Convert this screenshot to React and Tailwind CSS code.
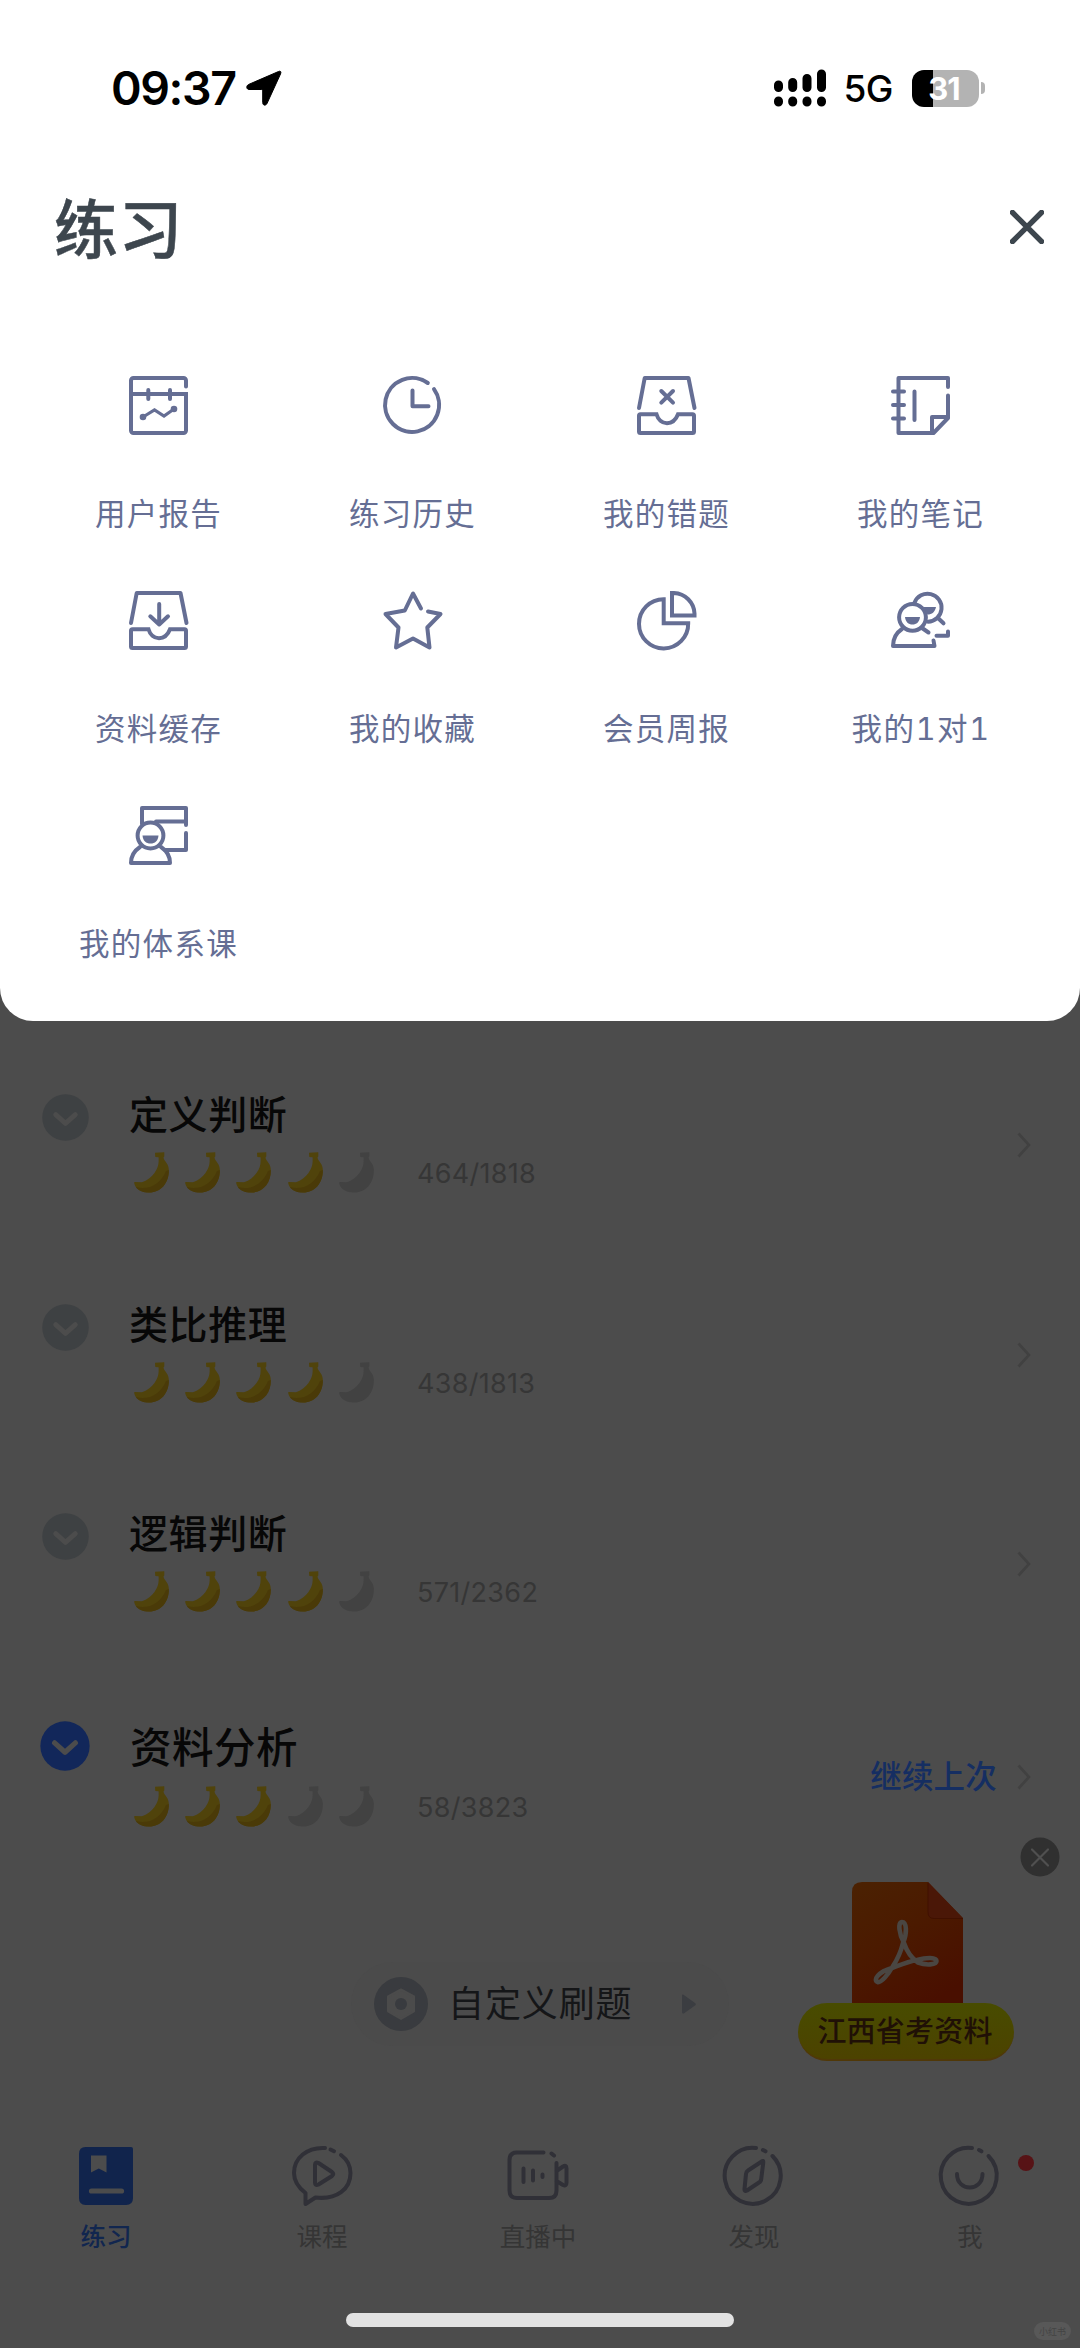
import React from "react";

const FONT = "font-[Inter,'Noto_Sans_CJK_SC',sans-serif]";

function Icon({ children, className = "" }) {
  return (
    <svg
      viewBox="0 0 60 60"
      className={`size-[60px] overflow-visible ${className}`}
      fill="none"
      stroke="currentColor"
      strokeWidth="4"
      strokeLinecap="round"
      strokeLinejoin="round"
    >
      {children}
    </svg>
  );
}

const Tray = () => (
  <>
    <path d="M2 32 7.700 2H51.500L57.500 32" />
    <path d="M19.500 38.300H3.500a1.500 1.500 0 0 0-1.500 1.500V55.500A1.500 1.500 0 0 0 3.500 57H55.500a1.500 1.500 0 0 0 1.500-1.500V39.800a1.500 1.500 0 0 0-1.500-1.500H41C39 43.500 35 47.200 30 47.200S21 43.500 19.500 38.300Z" strokeLinejoin="miter" />
  </>
);

const ReportIcon = () => (
  <Icon>
    <path d="M57 10.500V4.500A2.500 2.500 0 0 0 54.500 2H4.500A2.500 2.500 0 0 0 2 4.500V54.500A2.500 2.500 0 0 0 4.500 57H54.500A2.500 2.500 0 0 0 57 54.500V21" />
    <path d="M2 18H59M57 19V25" strokeLinecap="butt" />
    <path d="M19.300 14V23M41 14V23" />
    <path d="M14 41 25.500 34 35 40 45 33" strokeLinejoin="miter" strokeWidth="3.200" />
    <circle cx="14" cy="41" r="3.300" fill="currentColor" stroke="none" />
    <circle cx="45" cy="33" r="3.300" fill="currentColor" stroke="none" />
  </Icon>
);

const HistoryIcon = () => (
  <Icon>
    <path d="M44.800 7A27 27 0 1 0 51 13.200" />
    <path d="M29.500 14.500V30.300H45.500" />
  </Icon>
);

const WrongIcon = () => (
  <Icon>
    <Tray />
    <path d="M24.300 15 36 26.700M36 15 24.300 26.700" />
  </Icon>
);

const NoteIcon = () => (
  <Icon>
    <path d="M57 11V2H7.500V57H42.500L57 42V19.500" />
    <path d="M41 57V41H57M2 15.500H13M2 29H13M2 42.500H13M23.500 15.500V44" />
  </Icon>
);

const CacheIcon = () => (
  <Icon>
    <Tray />
    <path d="M30.200 13V33.500M21.300 25.300 30.200 33.500 39 25.300" />
  </Icon>
);

const StarIcon = () => (
  <Icon>
    <path d="M38 17.500 30 2.500 21.800 19.500 2.500 23 15.500 36.500 13 56.500 30 47.500 46.500 56.500 44.300 36.500 57.500 23 45 20.500" />
  </Icon>
);

const PieIcon = () => (
  <Icon>
    <g strokeLinejoin="miter">
      <path d="M26.700 8.200A24.600 24.600 0 1 0 51.200 32.300H26.700Z" />
      <path d="M35 2H37A21.500 21.500 0 0 1 57.500 22.500V24.400H35Z" />
    </g>
  </Icon>
);

const TutorIcon = () => (
  <Icon>
    <circle cx="21.500" cy="26.300" r="13.400" />
    <path d="M23.500 11.700A14 14 0 1 1 37 30.700M31 37 37.500 41.500M47.500 27.500 52.500 32.300" />
    <path d="M14 26H29C28.500 31 25.500 33.500 21.500 33.500S14.500 31 14 26ZM32.500 16H45C44 21 41 23.500 36.500 23.500Z" fill="currentColor" stroke="none" />
    <path d="M11 38C5 42 2 48.500 2 55H43.500L42.500 49.500" />
    <path d="M45.500 44.700H57V40.500" />
  </Icon>
);

const LessonIcon = () => (
  <Icon>
    <path d="M13 18V2H57V19M57 27V44H36M27 15.500H57" />
    <circle cx="21.500" cy="29.500" r="12.900" />
    <path d="M13.500 29.500H29.500C29 35 26 37.500 21.500 37.500S14 35 13.500 29.500Z" fill="currentColor" stroke="none" />
    <path d="M11 41C5 45 2 51 2 57H41C41 51 38 45 32 41" />
  </Icon>
);

const MENU = [
  ["用户报告", ReportIcon],
  ["练习历史", HistoryIcon],
  ["我的错题", WrongIcon],
  ["我的笔记", NoteIcon],
  ["资料缓存", CacheIcon],
  ["我的收藏", StarIcon],
  ["会员周报", PieIcon],
  ["我的1对1", TutorIcon],
  ["我的体系课", LessonIcon],
];

function StatusBar() {
  return (
    <div className="flex h-[176px] items-center pl-[111px] pr-[95px] text-black">
      <span className="text-[46.5px] leading-none font-semibold tracking-[-1.4px]">09:37</span>
      <svg viewBox="0 0 36 36" className="ml-[10px] size-[36px]">
        <path
          d="M32.500 1.500 2.500 14.500C-.2 16 .5 19.500 3 19.500H15C16.200 19.500 16.700 20 16.700 21V32.500C16.700 35.600 19.700 36 21 33.500L34.500 4C35.500 1.800 34.500.5 32.500 1.500Z"
          stroke="black"
          strokeWidth="1"
        />
      </svg>
      <div className="ml-auto flex items-center">
        <svg viewBox="0 0 52 38" className="h-[38px] w-[52px]" stroke="black" strokeWidth="9" strokeLinecap="round">
          <path d="M4.500 16V18.500M18.700 13.500V18.500M33 9.500V18.500M47.500 5V18.500M4.500 32V33M18.700 32V33M33 32V33M47.500 32V33" />
        </svg>
        <span className="ml-[17px] text-[37px] leading-none font-medium tracking-[-0.5px]">5G</span>
        <div className="ml-[19px] flex h-[37px] w-[67px] items-center justify-center rounded-[12px] bg-[linear-gradient(90deg,#000_31%,#b3b3b3_31%)] pr-[3px] text-[31px] leading-none font-bold tracking-[-1px] text-white">
          31
        </div>
        <div className="ml-[2px] h-[12px] w-[4px] rounded-r-full bg-[#b3b3b3]" />
      </div>
    </div>
  );
}

function MenuPanel() {
  return (
    <section className="h-[1021px] rounded-b-[33px] bg-white">
      <StatusBar />
      <header className="flex h-[102px] items-center justify-between pl-[54px] pr-[36px] text-[#3d464e]">
        <h1 className="mt-[5px] text-[64px] leading-none font-medium tracking-[0.5px] [-webkit-text-stroke:0.5px_currentColor]">练习</h1>
        <svg viewBox="0 0 34 34" className="-mt-px size-[34px]" stroke="currentColor" strokeWidth="5.400" strokeLinecap="round">
          <path d="M2.500 2.500 31.500 31.500M31.500 2.500 2.500 31.500" />
        </svg>
      </header>
      <div className="mt-[98px] grid grid-cols-4 px-[32px] text-[#656e94]">
        {MENU.map(([label, Glyph]) => (
          <div key={label} className="flex h-[215px] flex-col items-center">
            <Glyph />
            <span
              className={
                label === "我的1对1"
                  ? "mt-[58px] text-[30.5px] leading-[40px] tracking-[1.6px] whitespace-nowrap tabular-nums [word-spacing:0]"
                  : "mt-[58px] -ml-px text-[30.5px] leading-[40px] tracking-[1.3px] whitespace-nowrap"
              }
            >
              {label}
            </span>
          </div>
        ))}
      </div>
    </section>
  );
}

function Banana({ filled }) {
  return (
    <svg viewBox="0 0 36 41" className={filled ? "h-[41px] w-[36px] text-[#50430b]" : "h-[41px] w-[36px] text-[#424242]"}>
      <path
        fill="currentColor"
        d="M21 .8 30.300.300V4.500L29.500 5.500C30 9.500 34.800 11 34.800 18C35 31 27 40.500 15 40.500C8 40.500 1.500 37.500.300 31.500V30L8 30.300C14 28 17.500 25 20.500 21C24 16 25 12 24.600 5.300L21.300 5Z"
      />
      {filled && <path fill="#4a3a08" d="M2 35C14 39 27 32 32 19L34.800 18C35 31 27 40.500 15 40.500C9 40.500 4 38.500 2 35Z" />}
    </svg>
  );
}

const RightChevron = () => (
  <svg viewBox="0 0 14 26" className="h-[26px] w-[14px]" fill="none" stroke="#414141" strokeWidth="2.600">
    <path d="M1.500 1.500 12 13 1.500 24.500" />
  </svg>
);

function Topic({ title, score, filled, active }) {
  return (
    <div className={active ? "flex h-[215px] items-start pt-[48px] pr-[49px]" : "flex h-[209.5px] items-start pt-[48px] pr-[49px]"}>
      <div className="flex w-[130px] justify-center">
        <svg viewBox="0 0 50 50" className={active ? "size-[52px] text-[#12275a]" : "mt-[2px] size-[49px] text-[#3e4143]"}>
          <circle cx="25" cy="25" r="23.700" fill="currentColor" />
          <path d="M15 22 25 31 35 22" fill="none" stroke="#4c4c4c" strokeWidth="5" strokeLinecap="round" strokeLinejoin="round" />
        </svg>
      </div>
      <div className="flex flex-col">
        <h2
          className={
            active
              ? "mt-[4px] text-[41.5px] leading-[48px] font-medium tracking-[0.5px] text-[#070707]"
              : "mt-0 -ml-px text-[39px] leading-[48px] font-medium tracking-[0.6px] text-[#070707]"
          }
        >
          {title}
        </h2>
        <div className={active ? "mt-[14px] flex items-center" : "mt-[13px] flex items-center"}>
          <div className="ml-[4px] flex w-[283px] gap-[15.200px]">
            {[0, 1, 2, 3, 4].map((n) => (
              <Banana key={n} filled={n < filled} />
            ))}
          </div>
          <span className="mt-[2px] text-[27px] leading-none tracking-[0.3px] text-[#363636]">{score}</span>
        </div>
      </div>
      <div className={active ? "mt-[37px] ml-auto flex h-[40px] items-center" : "mt-[34px] ml-auto flex h-[40px] items-center"}>
        {active && <span className="mr-[20px] text-[31.5px] leading-none font-medium tracking-[0.2px] text-[#152e62]">继续上次</span>}
        <RightChevron />
      </div>
    </div>
  );
}

function CustomButton() {
  return (
    <button className="mx-auto mt-[75px] flex h-[84px] w-[378px] items-center rounded-full bg-[#4b4b4b] pl-[23px] text-[#151618]">
      <svg viewBox="0 0 54 54" className="size-[54px]">
        <circle cx="27" cy="27" r="27" fill="#393b3f" />
        <path d="M27 12.500 40 19.500V34.500L27 42 14 34.500V19.500Z" fill="#4b4b4b" stroke="#4b4b4b" strokeWidth="2" strokeLinejoin="round" />
        <circle cx="27" cy="27" r="6" fill="#393b3f" />
      </svg>
      <span className="ml-[20px] text-[36px] leading-none tracking-[0.9px]">自定义刷题</span>
      <svg viewBox="0 0 14 20" className="ml-[49px] h-[20px] w-[14px]">
        <path d="M0 2Q0-.5 2.500 1.500L13 9Q14.500 10 13 11.500L2.500 19Q0 20.500 0 18Z" fill="#3b3d41" />
      </svg>
    </button>
  );
}

/* Promotional file badge floating above the page. */
function FloatingFile() {
  return (
    <aside className="absolute top-[1837px] right-[20px] flex w-[262px] flex-col">
      <svg viewBox="0 0 40 40" className="size-[40px] self-end">
        <circle cx="20" cy="20" r="19.500" fill="#303030" />
        <path d="M12 12.500 28 28.500M28 12.500 12 28.500" stroke="#505050" strokeWidth="2.200" strokeLinecap="round" />
      </svg>
      <svg viewBox="0 0 112 122" className="mt-[5px] ml-[54px] h-[122px] w-[112px]">
        <defs>
          <linearGradient id="sheet" x1="0.100" y1="0" x2="0.700" y2="1">
            <stop offset="0" stopColor="#4b2102" />
            <stop offset="0.450" stopColor="#4b1a00" />
            <stop offset="1" stopColor="#490f00" />
          </linearGradient>
        </defs>
        <path d="M0 10Q0 0 10 0H76L111 36V122H0Z" fill="url(#sheet)" />
        <path d="M76 0 111 36.500H82Q76 36.500 76 30Z" fill="#4a1707" />
        <path d="M76 1V30Q76 36.500 82 36.500H111" fill="none" stroke="#401000" strokeWidth="1" />
        <path
          d="M52 61C47 52 45.500 40 50 40S55.500 51 51 61C49 69 45 78 41 84C36 93 29 101 25.500 100C21 98 26 90 40 86C48 83 56 79.500 65 78C74 75.500 84.500 75 84.500 79C84.500 83 74 83.500 66 80.500C60 76.500 55 70 52 61Z"
          fill="none"
          stroke="#4a4642"
          strokeWidth="4.600"
          strokeLinejoin="round"
        />
      </svg>
      <div className="-mt-px flex h-[58px] w-[216px] items-center justify-center rounded-full border-b-2 border-[#503808] bg-[linear-gradient(180deg,#484c00,#4c4200)] pr-[2px] text-[29px] leading-none font-medium tracking-[0.2px] text-[#201006]">
        江西省考资料
      </div>
    </aside>
  );
}

function PracticeGlyph() {
  return (
    <Icon>
      <path d="M9.500 1H55Q57 1 57 3V52Q57 59 50 59H9.500Q3 59 3 52V8Q3 1 9.500 1Z" fill="#11244c" stroke="none" />
      <path d="M15 9.500H30.500V26.500L22.800 22.500 15 26.500Z" fill="#4c4c4c" stroke="none" />
      <path d="M15.500 45H45.500" stroke="#4c4c4c" strokeWidth="5.200" />
    </Icon>
  );
}

const CourseGlyph = () => (
  <Icon>
    <path d="M33 2C15 1 2 12 2 27C2 36 7 42 13.500 47V58L23.500 51.500C45 54 58.500 43 58.500 27C58.500 20 55 13.500 49 9" />
    <path d="M38.500 3.500 42 5.200" />
    <path d="M23 19Q23 15.500 26.500 17L40 26Q42.500 28 40 30L26.500 38.500Q23 40 23 36.500Z" />
  </Icon>
);

const LiveGlyph = () => (
  <Icon>
    <path d="M35.500 6.500H9Q1.500 6.500 1.500 14V44.500Q1.500 52 9 52H41Q48.500 52 48.500 44.500V17M43.500 7.500 46 9.500M48.500 25 55 20.500Q58.500 18.500 58.500 22.500V36.500Q58.500 40.500 55 39L48.500 35" />
    <path d="M15.500 22.500V36M25 24.500V34.500M34.500 28.500V31" />
  </Icon>
);

const Ring = () => (
  <>
    <path d="M32 2A28 28 0 1 0 48.500 10" />
    <path d="M39 4 41.500 5.300" />
  </>
);

const DiscoverGlyph = () => (
  <Icon>
    <Ring />
    <path d="M38.500 15 24 24.500Q22.300 25.500 22 28L20.500 43Q20.200 46 23 44.500L35 36.500Q37 35.500 37.200 33L39.200 17Q39.500 14.500 38.500 15Z" />
  </Icon>
);

const MeGlyph = () => (
  <Icon>
    <Ring />
    <path d="M17 28C17 46 42.500 46 42.500 28" />
  </Icon>
);

const TABS = [
  ["练习", PracticeGlyph],
  ["课程", CourseGlyph],
  ["直播中", LiveGlyph],
  ["发现", DiscoverGlyph],
  ["我", MeGlyph],
];

function TabBar() {
  return (
    <nav className="mr-[2px] -ml-[2px] grid grid-cols-5 text-[#303037]">
      {TABS.map(([label, Glyph], i) => (
        <div key={label} className="relative flex flex-col items-center">
          <Glyph />
          <span
            className={
              i === 0
                ? "mt-[14px] text-[25.500px] leading-[34px] font-medium text-[#11264f]"
                : "mt-[14px] text-[25.500px] leading-[34px] text-[#353535]"
            }
          >
            {label}
          </span>
          {i === 4 && <span className="absolute top-[9px] left-[156px] size-[16px] rounded-full bg-[#571316]" />}
        </div>
      ))}
    </nav>
  );
}

export default function App() {
  return (
    <main className={`relative flex h-[2348px] w-[1080px] flex-col overflow-hidden bg-[#4c4c4c] ${FONT}`} lang="zh-CN">
      <MenuPanel />
      <div className="mt-[22px] flex flex-col">
        <Topic title="定义判断" score="464/1818" filled={4} />
        <Topic title="类比推理" score="438/1813" filled={4} />
        <Topic title="逻辑判断" score="571/2362" filled={4} />
        <Topic title="资料分析" score="58/3823" filled={3} active />
      </div>
      <CustomButton />
      <FloatingFile />
      <div className="mt-auto">
        <TabBar />
        <div className="mx-auto mt-[59px] mb-[21px] h-[14px] w-[388px] rounded-full bg-[#e2e2e2]" />
      </div>
      <div className="absolute right-[9px] bottom-[8px] flex h-[18px] w-[37px] items-center justify-center rounded-full bg-[#585858] text-[9px] leading-none text-[#444]">
        小红书
      </div>
    </main>
  );
}
